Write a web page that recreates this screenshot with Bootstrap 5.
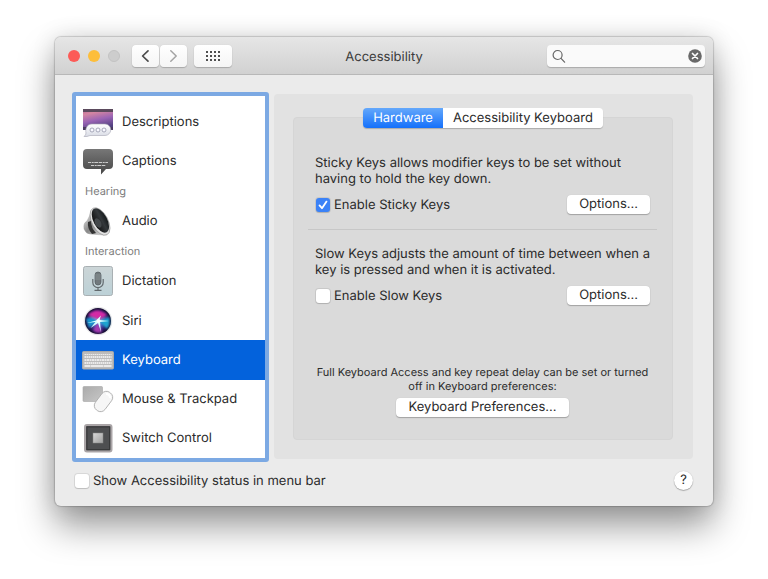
<!DOCTYPE html>
<html lang="en">
<head>
<meta charset="utf-8">
<meta name="viewport" content="width=device-width, initial-scale=1">
<title>Accessibility</title>
<link href="https://cdn.jsdelivr.net/npm/bootstrap@5.3.0/dist/css/bootstrap.min.css" rel="stylesheet">
<style>
  body { font-family: Inter, "Liberation Sans", sans-serif; font-size: 13px; line-height: 16px; color: #2b2b2b; background: #fff; text-rendering: geometricPrecision; }
  button { text-rendering: inherit; }
  .desk { padding: 37px 55px; min-height: 100vh; }
  .pref-window { background: #ebebeb; border-radius: 6px; box-shadow: 0 0 1px 1px rgba(0,0,0,.16), 0 20px 36px rgba(0,0,0,.4), 0 0 24px rgba(0,0,0,.12); }
  .titlebar { display: grid; grid-template-columns: 1fr auto 1fr; align-items: center; height: 38px; padding: 0 8px; background: linear-gradient(#e6e6e6, #d1d1d1); border-bottom: 1px solid #b8b8b8; border-radius: 6px 6px 0 0; }
  .light { width: 12px; height: 12px; border: 0; border-radius: 50%; padding: 0; }
  .light-close { background: #fc5b57; }
  .light-min { background: #fdbe3b; }
  .light-off { background: #cdcdcd; border: 1px solid #c3c3c3; }
  .lights { gap: 8px; margin: 0 12px 0 5px; }
  .tool { display: flex; align-items: center; justify-content: center; width: 27px; height: 22px; padding: 0; border: 0; background: linear-gradient(#fff, #f5f5f5); box-shadow: 0 1px 1px rgba(0,0,0,.2), 0 0 1px rgba(0,0,0,.15); border-radius: 4px; }
  .tool-next { margin-left: 1px; }
  .tool-wide { width: 38px; margin-left: 7px; }
  .title-text { padding-top: 2px; font-size: 13px; font-weight: 400; line-height: 16px; color: #3c3c3c; }
  .search-box { width: 158px; height: 22px; padding: 0 3px 0 5px; background: #fafafa; border-radius: 4px; box-shadow: 0 1px 1px rgba(0,0,0,.2); }
  .search-box input { min-width: 0; border: 0; background: transparent; outline: 0; font-size: 13px; }
  .plain { border: 0; padding: 0; background: transparent; display: flex; }

  .content { padding: 17px 20px 16px 17px; }
  .side { width: 197px; padding-top: 6px; background: #fff; border: 4px solid #7ca9e3; border-radius: 3px; }
  .side .entry { display: flex; align-items: center; min-height: 39px; padding-left: 6px; color: #2b2b2b; text-decoration: none; }
  .side .entry svg { width: 32px; height: 32px; margin-right: 8px; flex: none; }
  .side .entry.active { background: #0362dc; color: #fff; }
  .side h2 { font-size: 11px; line-height: 21px; font-weight: 400; color: #7d7d7d; margin: 0; padding-left: 9px; }

  .pane { margin: 2px 0 3px 5px; padding: 14px 20px 19px 19px; background: #e2e2e2; border-radius: 4px; }
  .tabs { height: 20px; margin-bottom: -11px; position: relative; border-radius: 4px; box-shadow: 0 1px 1px rgba(0,0,0,.22); }
  .tabs button { border: 0; padding: 0 10px; line-height: 20px; background: #fff; color: #2b2b2b; border-radius: 0 4px 4px 0; }
  .tabs button.active { color: #fff; background: linear-gradient(#64a8fb, #1470fb); border-radius: 4px 0 0 4px; }
  .group { width: 100%; padding: 37px 22px 22px 21px; background: #dadada; border: 1px solid #d5d5d5; border-radius: 4px; }
  .setting { margin-top: 8px; padding-left: 1px; }
  .rule { height: 1px; margin: 15px -7px 16px; background: #c7c7c7; }
  .note { margin: 60px 0 0; font-size: 11px; line-height: 14px; }
  .push { border: 0; padding: 0 12px; height: 19px; line-height: 19px; border-radius: 4px; background: #fff; color: #2b2b2b; box-shadow: 0 1px 1px rgba(0,0,0,.25), 0 0 1px rgba(0,0,0,.15); }
  .push-pref { display: block; margin: 5px auto 0; }
  .tick { appearance: none; width: 14px; height: 14px; margin: 0 4px 0 0; background: #fff; border-radius: 3px; box-shadow: 0 0 0 1px rgba(0,0,0,.08), 0 1px 1px rgba(0,0,0,.12); flex: none; }
  .tick:checked { background: #3b82f7 url("data:image/svg+xml,%3Csvg xmlns='http://www.w3.org/2000/svg' viewBox='0 0 14 14'%3E%3Cpath d='M3.5 7.4 6 10.2 10.5 3.6' fill='none' stroke='white' stroke-width='1.8' stroke-linecap='round' stroke-linejoin='round'/%3E%3C/svg%3E"); }
  .foot { margin-top: 9px; padding-left: 3px; }
  .help { width: 19px; height: 19px; border: 0; padding: 0; border-radius: 50%; background: #fff; color: #2b2b2b; line-height: 19px; box-shadow: 0 1px 1px rgba(0,0,0,.25), 0 0 1px rgba(0,0,0,.25); }
</style>
<script src="https://cdn.jsdelivr.net/npm/bootstrap@5.3.0/dist/js/bootstrap.bundle.min.js"></script>
</head>
<body>
<main class="desk">
  <div class="pref-window">
    <header class="titlebar">
      <div class="d-flex align-items-center">
        <div class="lights d-flex">
          <button class="light light-close" aria-label="Close"></button>
          <button class="light light-min" aria-label="Minimize"></button>
          <button class="light light-off" aria-label="Zoom" disabled></button>
        </div>
        <button class="tool" aria-label="Back"><svg width="10" height="14" viewBox="0 0 10 14"><path d="M7 1.8 1.600 7 7 12.200" fill="none" stroke="#4c4c4c" stroke-width="1.7" stroke-linecap="round" stroke-linejoin="round"/></svg></button>
        <button class="tool tool-next" aria-label="Forward"><svg width="10" height="14" viewBox="0 0 10 14"><path d="M1.800 1.8 7.200 7l-5.4 5.2" fill="none" stroke="#a3a3a3" stroke-width="1.5" stroke-linecap="round" stroke-linejoin="round"/></svg></button>
        <button class="tool tool-wide" aria-label="Show all"><svg width="16" height="12" viewBox="0 0 16 12" fill="#4f4f4f"><path d="M1 1h2v2H1zM5 1h2v2H5zM9 1h2v2H9zM13 1h2v2h-2zM1 5h2v2H1zM5 5h2v2H5zM9 5h2v2H9zM13 5h2v2h-2zM1 9h2v2H1zM5 9h2v2H5zM9 9h2v2H9zM13 9h2v2h-2z"/></svg></button>
      </div>
      <h1 class="title-text mb-0">Accessibility</h1>
      <div class="search-box d-flex align-items-center ms-auto">
        <label for="search" class="d-flex"><svg width="14" height="14" viewBox="0 0 14 14" fill="none" stroke="#666" stroke-width="1.2" stroke-linecap="round"><circle cx="5.6" cy="6" r="4.5"/><path d="m9 9.4 3.6 3.8"/></svg></label>
        <input id="search" type="text" class="flex-fill" aria-label="Search">
        <button class="plain" aria-label="Clear search"><svg width="14" height="14" viewBox="0 0 14 14"><circle cx="7" cy="7" r="6.8" fill="#696969"/><path d="m4.5 4.5 5 5m0-5-5 5" stroke="#fff" stroke-width="1.7" stroke-linecap="round"/></svg></button>
      </div>
    </header>

    <div class="content">
      <div class="d-flex">
        <nav class="side d-flex flex-column flex-shrink-0" aria-label="Accessibility features">
          <a href="#" class="entry flex-fill">
            <svg viewBox="0 0 32 32"><defs><linearGradient id="sky" x2="0.3" y2="1"><stop offset="0" stop-color="#b5638f"/><stop offset=".25" stop-color="#d486a2"/><stop offset=".6" stop-color="#9a64b5"/><stop offset="1" stop-color="#51407f"/></linearGradient><linearGradient id="bub" x2="0" y2="1"><stop offset="0" stop-color="#fff"/><stop offset="1" stop-color="#d8dbe5"/></linearGradient></defs><path d="M1 3h30v21H1z" fill="url(#sky)"/><path d="M1 3h30v3H1z" fill="#5b4a5d"/><path d="M1 21h30v3H1z" fill="#4b3b60"/><path d="M10 18h13a5.500 5.500 0 0 1 0 11.500H8q-3 1.500-6 1 2-1.500 2-3.500c-1-4 1-9 6-9z" fill="url(#bub)" stroke="#a6a6b4" stroke-width=".6"/><g fill="#f8f8ff" stroke="#9395aa" stroke-width=".8"><circle cx="10" cy="24" r="2"/><circle cx="16" cy="24" r="2"/><circle cx="22" cy="24" r="2"/></g></svg>
            Descriptions
          </a>
          <a href="#" class="entry flex-fill">
            <svg viewBox="0 0 32 32"><defs><linearGradient id="cap" x2="0" y2="1"><stop offset="0" stop-color="#777"/><stop offset="1" stop-color="#464646"/></linearGradient></defs><path d="M5 4h22q4 0 4 4v12q0 4-4 4h-3l-5 5.500V24H5q-4 0-4-4V8q0-4 4-4z" fill="url(#cap)"/><path d="M6 17.500h20M9 20.500h15" stroke="#ccc" stroke-width="1" stroke-dasharray="3 .7 2 .6 4 .7"/></svg>
            Captions
          </a>
          <h2>Hearing</h2>
          <a href="#" class="entry flex-fill">
            <svg viewBox="0 0 32 32"><defs><linearGradient id="spk" x2="1" y2="1"><stop offset="0" stop-color="#eee"/><stop offset=".5" stop-color="#888"/><stop offset="1" stop-color="#ddd"/></linearGradient><linearGradient id="cone"><stop offset="0" stop-color="#111"/><stop offset=".6" stop-color="#34383b"/><stop offset="1" stop-color="#15191b"/></linearGradient></defs><path d="M9 8 5 16q-4 2-3 8 2 5 6 5l14 1z" fill="url(#spk)" stroke="#999" stroke-width=".4"/><path d="M6 17q-1 6 4 12l4-1q-5-5-5-12z" fill="#333"/><ellipse cx="18" cy="16.500" rx="8" ry="15" transform="rotate(-28 18 16.500)" fill="#e1e1e1" stroke="#8c8c8c" stroke-width=".6"/><ellipse cx="18.400" cy="15.500" rx="6.800" ry="13.300" transform="rotate(-28 18.400 15.500)" fill="url(#cone)"/><ellipse cx="16" cy="18" rx="3" ry="5" transform="rotate(-28 16 18)" fill="#44484b"/></svg>
            Audio
          </a>
          <h2>Interaction</h2>
          <a href="#" class="entry flex-fill">
            <svg viewBox="0 0 32 32"><defs><linearGradient id="mic" x2="0" y2="1"><stop offset="0" stop-color="#ccd5d7"/><stop offset="1" stop-color="#bcd1d7"/></linearGradient></defs><rect x="1.500" y="1.500" width="29" height="29" rx="2" fill="url(#mic)" stroke="#a9b0b3"/><rect x="13" y="7" width="6" height="13" rx="3" fill="#71797d" stroke="#525a5e" stroke-width=".7"/><path d="M13 10h6M13 12h6M13 14h6" stroke="#949da1" stroke-width=".6"/><path d="M10.800 14v3.500a5.200 5.200 0 0 0 10.400 0V14M16 22.700v2.300M12.500 25.300h7" fill="none" stroke="#626a6e" stroke-width="1.200"/></svg>
            Dictation
          </a>
          <a href="#" class="entry flex-fill">
            <svg viewBox="0 0 32 32"><defs><radialGradient id="orb"><stop offset="0" stop-color="#a9e6ff"/><stop offset=".35" stop-color="#4a68c8"/><stop offset=".75" stop-color="#2d1c68"/><stop offset="1" stop-color="#120d2c"/></radialGradient><filter id="soft"><feGaussianBlur stdDeviation="1"/></filter><filter id="glow"><feGaussianBlur stdDeviation=".35"/></filter></defs><circle cx="16" cy="16" r="14.300" fill="#e6e6e8"/><circle cx="16" cy="16" r="13" fill="url(#orb)"/><g filter="url(#soft)"><path d="M6 10q9-9 19 0l-8 5z" fill="#d52aa5"/><path d="M4 14q5-4 12 2L7 23z" fill="#1496cd"/><path d="m17 16 10-4q2 7-2 12z" fill="#1aa6d1"/><path d="m16 17 4 10q-6 2-9-2z" fill="#a63bb1"/></g><path d="m5 18 9-2.500 5-5-1.500 4.500 9.500 1-9 1 1 10-3-9-7.500 5 5-6z" fill="#d8ffff" filter="url(#glow)"/><circle cx="16.500" cy="16" r="1.800" fill="#fff"/></svg>
            Siri
          </a>
          <a href="#" class="entry flex-fill active" aria-current="page">
            <svg viewBox="0 0 32 32"><rect x=".5" y="7.500" width="31" height="17.500" rx="1" fill="#bcbcbc" stroke="#a9a9a9"/><g stroke="#eaeaea" stroke-width="2"><path d="M2.500 10.500h27" stroke-dasharray="1.500 .5" stroke-width="1"/><path d="M2.500 13h27" stroke-dasharray="1.500 .5"/><path d="M2.500 16h27" stroke-dasharray="2 .5"/><path d="M2.500 19h27" stroke-dasharray="1.500 .5"/><path d="M2.500 22h6m.5 0h12m.5 0h8"/></g></svg>
            Keyboard
          </a>
          <a href="#" class="entry flex-fill">
            <svg viewBox="0 0 32 32"><defs><linearGradient id="pad" x2="1" y2="1"><stop offset="0" stop-color="#aaa"/><stop offset="1" stop-color="#c7c7c7"/></linearGradient></defs><rect x="1" y="3.500" width="19.500" height="15" rx="1" fill="url(#pad)" stroke="#a6a6a6" stroke-width=".6"/><rect x="15.500" y="7.500" width="12" height="22" rx="5.500" transform="rotate(37 21.500 18.500)" fill="#f6f6f6" stroke="#a9a9a9" stroke-width=".8"/><path d="M24 11q4 0 4 4" stroke="#fff" stroke-width="2" fill="none"/></svg>
            Mouse &amp; Trackpad
          </a>
          <a href="#" class="entry flex-fill">
            <svg viewBox="0 0 32 32"><defs><linearGradient id="sw" x2="1" y2="1"><stop offset="0" stop-color="#d9d9d9"/><stop offset="1" stop-color="#9f9f9f"/></linearGradient></defs><rect x="3" y="3" width="26.500" height="26.500" rx="2" fill="#4e4f51" stroke="#aaa5a7" stroke-width="2"/><rect x="5" y="5" width="22.500" height="22.500" fill="none" stroke="#38393a"/><rect x="11" y="11" width="10" height="10" fill="url(#sw)" stroke="#888" stroke-width=".5"/></svg>
            Switch Control
          </a>
        </nav>

        <section class="pane flex-fill d-flex flex-column align-items-center">
          <div class="tabs d-flex" role="tablist">
            <button class="active" role="tab" aria-selected="true">Hardware</button>
            <button role="tab" aria-selected="false">Accessibility Keyboard</button>
          </div>
          <div class="group flex-fill">
            <p class="mb-0 text-nowrap">Sticky Keys allows modifier keys to be set without<br>having to hold the key down.</p>
            <div class="setting d-flex align-items-center">
              <input class="tick" type="checkbox" id="sticky" checked>
              <label for="sticky">Enable Sticky Keys</label>
              <button class="push ms-auto">Options...</button>
            </div>
            <div class="rule"></div>
            <p class="mb-0 text-nowrap">Slow Keys adjusts the amount of time between when a<br>key is pressed and when it is activated.</p>
            <div class="setting d-flex align-items-center">
              <input class="tick" type="checkbox" id="slow">
              <label for="slow">Enable Slow Keys</label>
              <button class="push ms-auto">Options...</button>
            </div>
            <p class="note text-center">Full Keyboard Access and key repeat delay can be set or turned<br>off in Keyboard preferences:</p>
            <button class="push push-pref">Keyboard Preferences...</button>
          </div>
        </section>
      </div>
      <footer class="foot d-flex align-items-center">
        <input class="tick" type="checkbox" id="status">
        <label for="status">Show Accessibility status in menu bar</label>
        <button class="help ms-auto" aria-label="Help">?</button>
      </footer>
    </div>
  </div>
</main>
</body>
</html>
